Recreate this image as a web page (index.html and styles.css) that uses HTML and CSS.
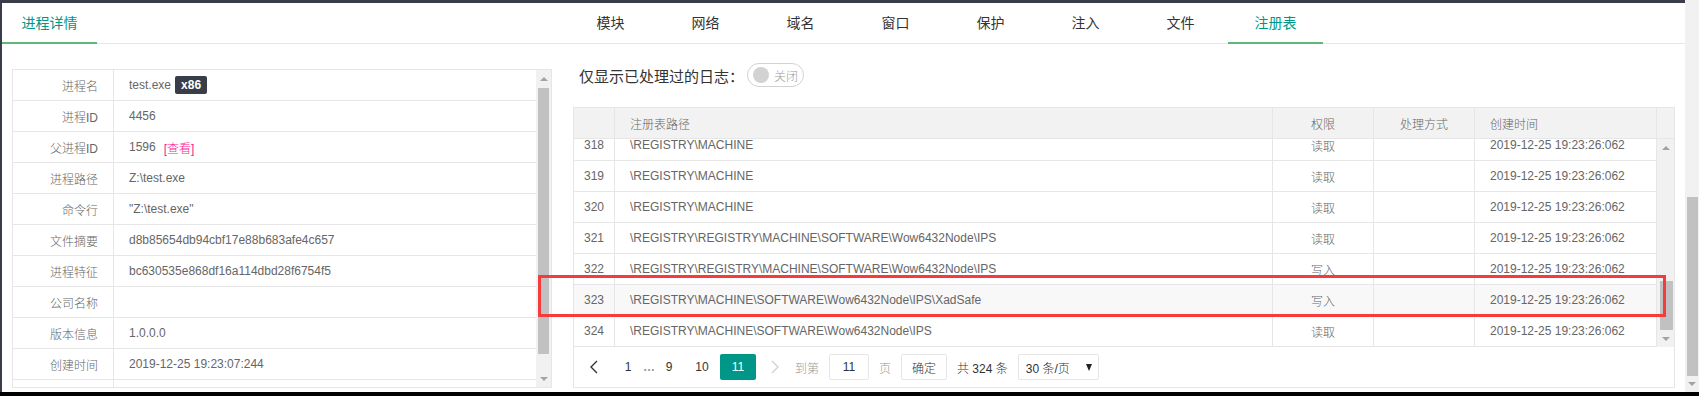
FILE: index.html
```html
<!DOCTYPE html>
<html lang="zh-CN">
<head>
    <meta charset="UTF-8">
    <title>进程详情</title>
    <link rel="stylesheet" href="styles.css">
</head>
<body>
    <div class="window">
        <div class="main">
            <!-- 左侧：进程详情 -->
            <div class="panel panel-left">
                <div class="tab-title">
                    <div class="tab this">进程详情</div>
                </div>
                <div class="panel-body">
                    <div class="info-box">
                        <div class="info-scroll">
                            <div class="info-row"><div class="info-label">进程名</div><div class="info-value">test.exe<span class="badge">x86</span></div></div>
                            <div class="info-row"><div class="info-label">进程ID</div><div class="info-value">4456</div></div>
                            <div class="info-row"><div class="info-label">父进程ID</div><div class="info-value">1596<a class="link">[查看]</a></div></div>
                            <div class="info-row"><div class="info-label">进程路径</div><div class="info-value">Z:\test.exe</div></div>
                            <div class="info-row"><div class="info-label">命令行</div><div class="info-value">"Z:\test.exe"</div></div>
                            <div class="info-row"><div class="info-label">文件摘要</div><div class="info-value">d8b85654db94cbf17e88b683afe4c657</div></div>
                            <div class="info-row"><div class="info-label">进程特征</div><div class="info-value">bc630535e868df16a114dbd28f6754f5</div></div>
                            <div class="info-row"><div class="info-label">公司名称</div><div class="info-value"></div></div>
                            <div class="info-row"><div class="info-label">版本信息</div><div class="info-value">1.0.0.0</div></div>
                            <div class="info-row"><div class="info-label">创建时间</div><div class="info-value">2019-12-25 19:23:07:244</div></div>
                            <div class="info-row"><div class="info-label"></div><div class="info-value"></div></div>
                        </div>
                        <div class="scrollbar sb-info">
                            <div class="sb-btn"><span class="tri-up"></span></div>
                            <div class="sb-thumb"></div>
                            <div class="sb-space"></div>
                            <div class="sb-btn"><span class="tri-down"></span></div>
                        </div>
                    </div>
                </div>
            </div>

            <!-- 右侧：注册表 -->
            <div class="panel panel-right">
                <div class="tab-title">
                    <div class="tab">模块</div>
                    <div class="tab">网络</div>
                    <div class="tab">域名</div>
                    <div class="tab">窗口</div>
                    <div class="tab">保护</div>
                    <div class="tab">注入</div>
                    <div class="tab">文件</div>
                    <div class="tab this">注册表</div>
                </div>
                <div class="panel-body">
                    <div class="toolbar">
                        <span>仅显示已处理过的日志：</span>
                        <div class="switch"><i></i><em>关闭</em></div>
                    </div>
                    <div class="grid-box">
                        <div class="grid-head">
                            <div class="cell c-num"></div>
                            <div class="cell">注册表路径</div>
                            <div class="cell c-center">权限</div>
                            <div class="cell c-center">处理方式</div>
                            <div class="cell">创建时间</div>
                            <div class="cell c-bar"></div>
                        </div>
                        <div class="grid-body">
                            <div class="grid-rows">
                                <div class="grid-inner">
                                    <div class="grid-row"><div class="cell c-num">318</div><div class="cell">\REGISTRY\MACHINE</div><div class="cell c-center">读取</div><div class="cell"></div><div class="cell">2019-12-25 19:23:26:062</div></div>
                                    <div class="grid-row"><div class="cell c-num">319</div><div class="cell">\REGISTRY\MACHINE</div><div class="cell c-center">读取</div><div class="cell"></div><div class="cell">2019-12-25 19:23:26:062</div></div>
                                    <div class="grid-row"><div class="cell c-num">320</div><div class="cell">\REGISTRY\MACHINE</div><div class="cell c-center">读取</div><div class="cell"></div><div class="cell">2019-12-25 19:23:26:062</div></div>
                                    <div class="grid-row"><div class="cell c-num">321</div><div class="cell">\REGISTRY\REGISTRY\MACHINE\SOFTWARE\Wow6432Node\IPS</div><div class="cell c-center">读取</div><div class="cell"></div><div class="cell">2019-12-25 19:23:26:062</div></div>
                                    <div class="grid-row"><div class="cell c-num">322</div><div class="cell">\REGISTRY\REGISTRY\MACHINE\SOFTWARE\Wow6432Node\IPS</div><div class="cell c-center">写入</div><div class="cell"></div><div class="cell">2019-12-25 19:23:26:062</div></div>
                                    <div class="grid-row hover"><div class="cell c-num">323</div><div class="cell">\REGISTRY\MACHINE\SOFTWARE\Wow6432Node\IPS\XadSafe</div><div class="cell c-center">写入</div><div class="cell"></div><div class="cell">2019-12-25 19:23:26:062</div></div>
                                    <div class="grid-row"><div class="cell c-num">324</div><div class="cell">\REGISTRY\MACHINE\SOFTWARE\Wow6432Node\IPS</div><div class="cell c-center">读取</div><div class="cell"></div><div class="cell">2019-12-25 19:23:26:062</div></div>
                                </div>
                            </div>
                            <div class="scrollbar sb-grid">
                                <div class="sb-btn"><span class="tri-up"></span></div>
                                <div class="sb-space"></div>
                                <div class="sb-thumb"></div>
                                <div class="sb-btn"><span class="tri-down"></span></div>
                            </div>
                        </div>
                        <!-- 分页 -->
                        <div class="pager">
                            <a class="pg-prev"><svg width="8" height="14" viewBox="0 0 8 14"><polyline points="7,1 1,7 7,13" fill="none" stroke="#333" stroke-width="1.4"/></svg></a>
                            <a class="pg-num pg-1">1</a>
                            <span class="pg-spr">…</span>
                            <a class="pg-num">9</a>
                            <a class="pg-num pg-10">10</a>
                            <span class="pg-curr">11</span>
                            <a class="pg-next"><svg width="8" height="14" viewBox="0 0 8 14"><polyline points="1,1 7,7 1,13" fill="none" stroke="#d2d2d2" stroke-width="1.4"/></svg></a>
                            <div class="pg-skip">
                                <span class="pg-grey">到第</span>
                                <span class="pg-input">11</span>
                                <span class="pg-grey">页</span>
                                <span class="pg-btn">确定</span>
                                <span class="pg-count">共 324 条</span>
                                <span class="pg-limit">30 条/页<span class="tri-select"></span></span>
                            </div>
                        </div>
                    </div>
                </div>
            </div>

            <!-- 标注框 -->
            <div class="mark"></div>
        </div>

        <div class="scrollbar sb-page">
            <div class="sb-space"></div>
            <div class="sb-thumb"></div>
            <div class="sb-btn"><span class="tri-down"></span></div>
        </div>
    </div>
    <div class="bottom-band"></div>
</body>
</html>
```

FILE: styles.css
```css
/* 基础 */
* {
    box-sizing: border-box;
}

body {
    margin: 0;
    width: 1699px;
    height: 396px;
    overflow: hidden;
    background: #000;
    font-family: "Liberation Sans", "Noto Sans CJK SC", sans-serif;
    font-size: 12px;
    font-weight: 300;
    color: #666;
}

.window {
    display: flex;
    height: 392px;
    background: #fff;
}

.main {
    position: relative;
    display: flex;
    width: 1685px;
    height: 392px;
    border-top: 3px solid #393d49;
    border-left: 2px solid #393d49;
}

.panel-left {
    width: 561px;
}

.panel-right {
    width: 1122px;
}

/* 选项卡 */
.tab-title {
    display: flex;
    height: 41px;
    border-bottom: 1px solid #e6e6e6;
}

.tab {
    position: relative;
    width: 95px;
    height: 40px;
    line-height: 40px;
    text-align: center;
    font-size: 14px;
    font-weight: 400;
    color: #333;
}

.tab.this {
    color: #009688;
}

.tab.this::after {
    content: "";
    position: absolute;
    left: 0;
    right: 0;
    bottom: -1px;
    height: 2px;
    background: #5fb878;
}

/* 左侧信息表 */
.panel-left .panel-body {
    padding: 25px 11px 0 10px;
}

.info-box {
    display: flex;
    width: 540px;
    height: 319px;
    border: 1px solid #e6e6e6;
}

.info-scroll {
    flex: 1;
    overflow: hidden;
}

.info-row {
    display: flex;
    height: 31px;
    border-bottom: 1px solid #e6e6e6;
}

.info-label {
    display: flex;
    align-items: center;
    justify-content: flex-end;
    width: 101px;
    padding-right: 15px;
    border-right: 1px solid #e6e6e6;
}

.info-value {
    display: flex;
    align-items: center;
    flex: 1;
    padding-left: 15px;
}

.badge {
    display: inline-block;
    height: 18px;
    line-height: 18px;
    padding: 0 6px;
    margin-left: 4px;
    border-radius: 2px;
    background: #393d49;
    color: #fff;
    font-weight: bold;
}

.link {
    margin-left: 8px;
    color: #ff1493;
}

/* 滚动条 */
.scrollbar {
    display: flex;
    flex-direction: column;
    background: #f1f1f1;
}

.sb-btn {
    display: flex;
    align-items: center;
    justify-content: center;
    height: 17px;
}

.sb-space {
    flex: 1;
}

.sb-thumb {
    margin: 0 2px;
    background: #c1c1c1;
}

.tri-up,
.tri-down {
    width: 0;
    height: 0;
    border-left: 4px solid transparent;
    border-right: 4px solid transparent;
}

.tri-up {
    border-bottom: 4px solid #a3a3a3;
}

.tri-down {
    border-top: 4px solid #a3a3a3;
}

.sb-info {
    width: 15px;
}

.sb-info .sb-thumb {
    margin-top: 1px;
    height: 266px;
}

.sb-grid {
    width: 17px;
}

.sb-grid .sb-thumb {
    height: 49px;
    margin: 0 1px 0 3px;
}

.sb-page {
    width: 14px;
}

.sb-page .sb-thumb {
    height: 179px;
    margin: 0 1px 0 2px;
}

.sb-page .sb-btn {
    height: 16px;
}

/* 右侧工具栏 */
.panel-right .panel-body {
    padding: 0 10px;
}

.toolbar {
    display: flex;
    align-items: center;
    height: 24px;
    margin-top: 19px;
    padding-left: 6px;
    font-size: 15px;
    font-weight: 400;
    color: #333;
}

.switch {
    display: flex;
    align-items: center;
    width: 57px;
    height: 24px;
    margin-left: 3px;
    padding: 0 5px;
    border: 1px solid #d2d2d2;
    border-radius: 20px;
}

.switch i {
    width: 16px;
    height: 16px;
    border-radius: 50%;
    background: #d2d2d2;
}

.switch em {
    margin-left: 5px;
    font-style: normal;
    font-size: 12px;
    font-weight: 300;
    color: #999;
}

/* 右侧数据表 */
.grid-box {
    width: 1102px;
    height: 281px;
    margin-top: 20px;
    border: 1px solid #e6e6e6;
}

.grid-head,
.grid-row {
    display: grid;
    height: 31px;
    border-bottom: 1px solid #e6e6e6;
}

.grid-head {
    grid-template-columns: 41px 658px 101px 101px 182px 17px;
    background: #f2f2f2;
}

.grid-row {
    grid-template-columns: 41px 658px 101px 101px 182px;
}

.grid-row.hover {
    background: #f8f8f8;
}

.cell {
    display: flex;
    align-items: center;
    padding: 0 15px;
    border-right: 1px solid #e6e6e6;
    white-space: nowrap;
    overflow: hidden;
}

.cell.c-num,
.cell.c-center {
    justify-content: center;
    padding: 0;
}

.grid-head .c-bar {
    border-right: none;
}

.grid-body {
    display: flex;
    height: 208px;
}

.grid-rows {
    width: 1083px;
    overflow: hidden;
}

.grid-inner {
    margin-top: -9px;
}

/* 分页 */
.pager {
    display: flex;
    align-items: center;
    height: 40px;
    padding-left: 7px;
    color: #333;
}

.pager a,
.pager span {
    display: flex;
    align-items: center;
    justify-content: center;
    height: 26px;
}

.pg-prev {
    width: 26px;
}

.pg-num {
    width: 24px;
}

.pg-1 {
    margin-left: 9px;
}

.pg-spr {
    width: 16px;
    margin-left: 1px;
    color: #999;
    font-weight: bold;
}

.pg-10 {
    width: 36px;
    margin-left: 3px;
}

.pg-curr {
    width: 36px;
    border-radius: 2px;
    background: #009688;
    color: #fff;
}

.pg-next {
    width: 24px;
    margin-left: 7px;
}

.pg-skip {
    display: flex;
    align-items: center;
    gap: 10px;
    margin-left: 8px;
}

.pg-grey {
    color: #999;
}

.pg-input {
    width: 40px;
    border: 1px solid #e6e6e6;
    border-radius: 2px;
}

.pg-btn {
    width: 46px;
    border: 1px solid #e6e6e6;
    border-radius: 2px;
    background: #fff;
}

.pager .pg-limit {
    justify-content: space-between;
    width: 81px;
    padding: 0 6px 0 7px;
    border: 1px solid #e6e6e6;
    border-radius: 2px;
}

.pager .tri-select {
    width: 0;
    height: 0;
    border-left: 3.5px solid transparent;
    border-right: 3.5px solid transparent;
    border-top: 7px solid #222;
}

/* 红色标注框 */
.mark {
    position: absolute;
    left: 536px;
    top: 272px;
    width: 1128px;
    height: 42px;
    border: 3px solid #f53b3b;
}

.bottom-band {
    height: 4px;
    background: #000;
}
```
